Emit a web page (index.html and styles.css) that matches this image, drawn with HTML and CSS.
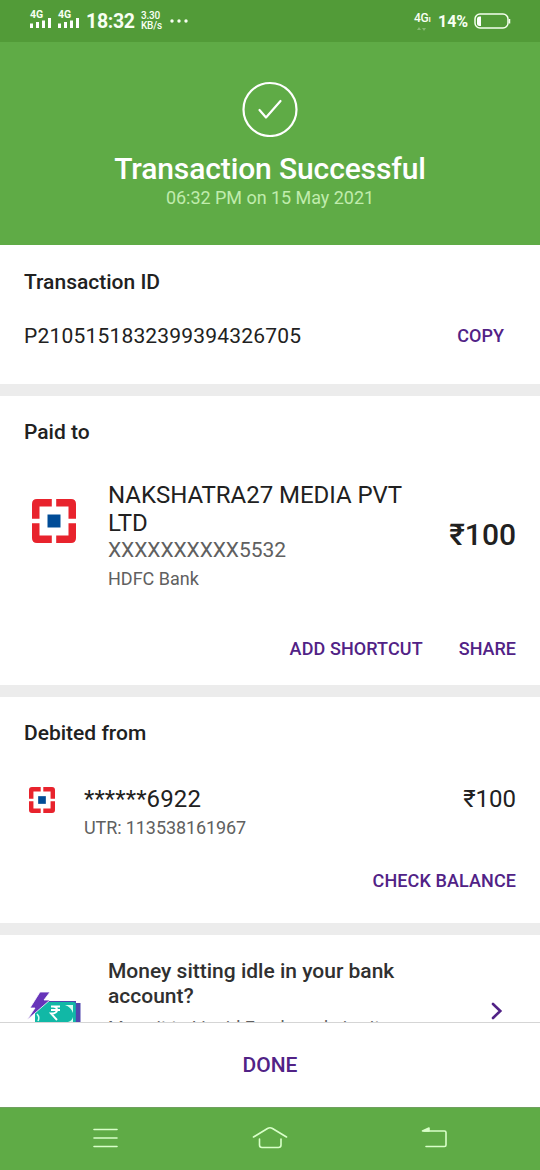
FILE: index.html
```html
<!DOCTYPE html>
<html lang="en">
<head>
<meta charset="utf-8">
<title>Transaction Successful</title>
<link rel="stylesheet" href="styles.css">
</head>
<body>
<svg class="defs" width="0" height="0" aria-hidden="true">
  <symbol id="bank" viewBox="0 0 44 44">
    <path fill="#e8232d" d="M5 0H19.800V7.500H7.500V19.800H0V5Q0 0 5 0ZM24.200 0H39Q44 0 44 5V19.800H36.500V7.500H24.200ZM0 24.200H7.500V36.500H19.800V44H5Q0 44 0 39ZM36.500 24.200H44V39Q44 44 39 44H24.200V36.500H36.500Z"/>
    <path fill="#004c97" d="M15.500 15.500H28.500V28.500H15.500Z"/>
  </symbol>
  <symbol id="signal" viewBox="0 0 22 10">
    <path fill="#fff" d="M0 5.500h3V10H0zM6 4h3v6H6zM12 2.500h3V10h-3zM18 0h3v10h-3z"/>
  </symbol>
</svg>
<div class="screen">
  <div class="status">
    <div class="sim"><span>4G</span><svg width="22" height="10"><use href="#signal"/></svg></div>
    <div class="sim"><span>4G</span><svg width="22" height="10"><use href="#signal"/></svg></div>
    <div class="clock">18:32</div>
    <div class="speed"><span>3.30</span><span>KB/s</span></div>
    <svg class="dots" width="18" height="4"><circle cx="2" cy="2" r="1.700"/><circle cx="9" cy="2" r="1.700"/><circle cx="16" cy="2" r="1.700"/></svg>
    <div class="net"><span>4G<small>ı</small></span><svg width="10" height="5"><path d="M0 4L2 1L4 4M5 2L7 5L9 2" fill="#fff" opacity=".3"/></svg></div>
    <div class="percent">14%</div>
    <svg class="battery" width="37" height="17" viewBox="0 0 37 17"><rect x="1" y="1" width="33" height="14" rx="5" fill="none" stroke="#f4ffed" stroke-width="1.500"/><path d="M5.500 3.500H7V13H5.500Q3 13 3 10.500V6Q3 3.500 5.500 3.500Z" fill="#fff"/><path d="M35.500 6v4.500" stroke="#f4ffed" stroke-width="1.500"/></svg>
  </div>
  <header class="hero">
    <svg width="56" height="56" viewBox="0 0 56 56" fill="none" stroke="#fff" stroke-width="2.200"><circle cx="28" cy="28.500" r="26.500"/><path d="M17.500 29L24 36.500L38.500 20" stroke-linecap="round" stroke-linejoin="round"/></svg>
    <h1>Transaction Successful</h1>
    <p>06:32 PM on 15 May 2021</p>
  </header>
  <section class="card card-id">
    <h2>Transaction ID</h2>
    <div class="id-row"><span class="id">P2105151832399394326705</span><span class="action">COPY</span></div>
  </section>
  <section class="card card-paid">
    <h2>Paid to</h2>
    <div class="payee">
      <svg width="44" height="44"><use href="#bank"/></svg>
      <div class="payee-info">
        <div class="name">NAKSHATRA27 MEDIA PVT<br>LTD</div>
        <div class="account">XXXXXXXXXX5532</div>
        <div class="bank">HDFC Bank</div>
      </div>
      <div class="amount">₹100</div>
    </div>
    <div class="actions"><span class="action shortcut">ADD SHORTCUT</span><span class="action share">SHARE</span></div>
  </section>
  <section class="card card-debit">
    <h2>Debited from</h2>
    <div class="source">
      <svg width="26" height="26"><use href="#bank"/></svg>
      <div class="source-info"><div class="masked">******6922</div><div class="utr">UTR: 113538161967</div></div>
      <div class="debit">₹100</div>
    </div>
    <div class="actions"><span class="action check">CHECK BALANCE</span></div>
  </section>
  <section class="promo">
    <svg class="cash" width="58" height="50" viewBox="0 0 58 50">
      <path d="M18 9H50V11H54.500V50H18Z" fill="#5146ae"/>
      <path d="M18 10.500H50V50H18Z" fill="#258ab3"/>
      <path d="M9 50V15Q9 10 14 10H47Q49.500 10 49.500 12.500V50Z" fill="#11b8a6"/>
      <path d="M11 22Q14 25 12 29" fill="none" stroke="#d8fff5" stroke-width="1.500"/>
      <path d="M39 13H47V21Q45 15 39 13ZM47 25V30H42Q46 29 47 25Z" fill="#d8fff5"/>
      <path d="M25 14.500H34M25 18H34M25 14.500H27Q31 14.500 31 18Q31 21.500 25 21.500L31 28" fill="none" stroke="#fff" stroke-width="1.900"/>
      <path d="M14 0H24L18 8H24L1 28L9 16H4Z" fill="#6734b9" stroke="#fff" stroke-width=".8"/>
    </svg>
    <div class="promo-text"><h3>Money sitting idle in your bank<br>account?</h3><p>Move it to Liquid Funds and give it</p></div>
    <svg class="chevron" width="12" height="18" viewBox="0 0 12 18"><path d="M2 2L9.300 9L2 16" fill="none" stroke="#512286" stroke-width="2.600" stroke-linecap="round"/></svg>
  </section>
  <div class="done">DONE</div>
  <nav class="nav">
    <svg width="28" height="24" viewBox="0 0 28 24"><path d="M3 4.500H26M3 13H26M3 21.500H26"/></svg>
    <svg width="36" height="24" viewBox="0 0 36 24"><path d="M1.500 12L15.500 3.500Q18 2 20.500 3.500L34.500 12M7.500 14V20Q7.500 22.500 10 22.500H26.500Q29 22.500 29 20V14"/></svg>
    <svg width="28" height="24" viewBox="0 0 28 24"><path d="M3 6H23.500Q25 6 25 7.500V20Q25 21.500 23.500 21.500H5"/><path class="tip" d="M1.500 6L8 3V6Z"/></svg>
  </nav>
</div>
</body>
</html>
```
FILE: styles.css
```css
* { box-sizing: border-box; }
body { margin: 0; font-family: Roboto, "Noto Sans", sans-serif; background: #fff; color: #212121; }
h1, h2, h3, p { margin: 0; font-weight: 500; }
svg { display: block; flex: none; }
.defs { position: absolute; }
.screen { width: 540px; height: 1170px; display: flex; flex-direction: column; overflow: hidden; white-space: nowrap; }

.status { height: 42px; flex: none; background: #529b38; color: #f8fff3; display: flex; align-items: flex-start; padding-left: 30px; }
.sim { width: 28px; padding-top: 10px; }
.sim span { display: block; font-size: 10.5px; line-height: 9px; font-weight: 700; }
.sim svg { margin-top: -1px; }
.clock { width: 54px; font-size: 19.5px; line-height: 24px; font-weight: 700; padding-top: 10px; letter-spacing: -0.3px; }
.speed { width: 30px; display: flex; flex-direction: column; font-size: 10px; line-height: 10px; font-weight: 500; padding: 11px 0 0 1px; letter-spacing: -0.2px; }
.dots { fill: #f8fff3; margin-top: 19px; }
.net { width: 24px; margin-left: 226px; padding-top: 11px; font-size: 12px; line-height: 14px; font-weight: 500; letter-spacing: -0.3px; }
.net small { font-size: 9px; }
.net svg { margin-left: 3px; }
.percent { width: 36px; font-size: 16px; line-height: 20px; font-weight: 700; padding-top: 12px; }
.battery { margin-top: 13px; }

.hero { height: 203px; flex: none; background: #5fab46; color: #fff; display: flex; flex-direction: column; align-items: center; padding-top: 39px; }
.hero h1 { font-size: 30px; line-height: 36px; margin-top: 14px; letter-spacing: -0.12px; }
.hero p { font-size: 18px; line-height: 22px; font-weight: 400; color: #c0ecad; letter-spacing: -0.04px; }

.card { border-bottom: 12px solid #ececec; padding: 0 24px; flex: none; }
.card h2 { font-size: 21px; line-height: 26px; font-weight: 500; }
.card-id { height: 151px; padding-top: 24px; }
.id-row { display: flex; justify-content: space-between; align-items: center; margin-top: 28px; line-height: 26px; padding-right: 12px; }
.id { font-size: 21px; letter-spacing: 0.19px; }
.action { font-size: 18px; line-height: 24px; font-weight: 500; color: #512286; }
.shortcut, .check { letter-spacing: 0.1px; }
.card-paid { height: 301px; padding-top: 23px; }
.payee { display: flex; margin-top: 36px; padding-left: 8px; align-items: flex-start; }
.payee > svg { margin-top: 18px; }
.payee-info { margin-left: 32px; flex: 1; }
.name { font-size: 24px; line-height: 28px; letter-spacing: -0.04px; }
.account { font-size: 21px; line-height: 26px; color: #606060; letter-spacing: -0.07px; }
.bank { font-size: 18px; line-height: 24px; color: #606060; margin-top: 4px; }
.amount { font-size: 30px; line-height: 36px; font-weight: 500; margin-top: 36px; }
.actions { display: flex; justify-content: flex-end; gap: 36px; }
.card-paid .actions { margin-top: 46px; }
.card-debit { height: 238px; padding-top: 23px; }
.source { display: flex; align-items: flex-start; margin-top: 39px; padding-left: 5px; }
.source > svg { margin-top: 2px; }
.source-info { margin-left: 29px; flex: 1; }
.masked, .debit { font-size: 24px; line-height: 28px; }
.masked { letter-spacing: 0.1px; }
.utr { font-size: 18px; line-height: 24px; color: #606060; margin-top: 3px; letter-spacing: -0.1px; }
.card-debit .actions { margin-top: 29px; }

.promo { height: 88px; flex: none; overflow: hidden; border-bottom: 1px solid #d5d5d5; display: flex; align-items: flex-start; padding-left: 26px; }
.cash { margin-top: 57px; }
.promo-text { margin-left: 24px; width: 383px; padding-top: 24px; }
.promo h3 { font-size: 21px; line-height: 24.5px; color: #303030; }
.promo p { font-size: 18px; line-height: 24px; font-weight: 400; color: #606060; margin-top: 8px; }
.chevron { margin-top: 67px; }
.done { height: 84px; flex: none; display: flex; align-items: center; justify-content: center; color: #512286; font-size: 21px; font-weight: 500; }
.nav { height: 63px; flex: none; background: #5fab46; border-top: 1px solid #70a060; display: flex; justify-content: space-between; padding: 17px 91px 0; }
.nav svg { fill: none; stroke: #d9ffc9; stroke-width: 1.6; stroke-linecap: round; stroke-linejoin: round; }
.nav .tip { fill: #d9ffc9; }
```
